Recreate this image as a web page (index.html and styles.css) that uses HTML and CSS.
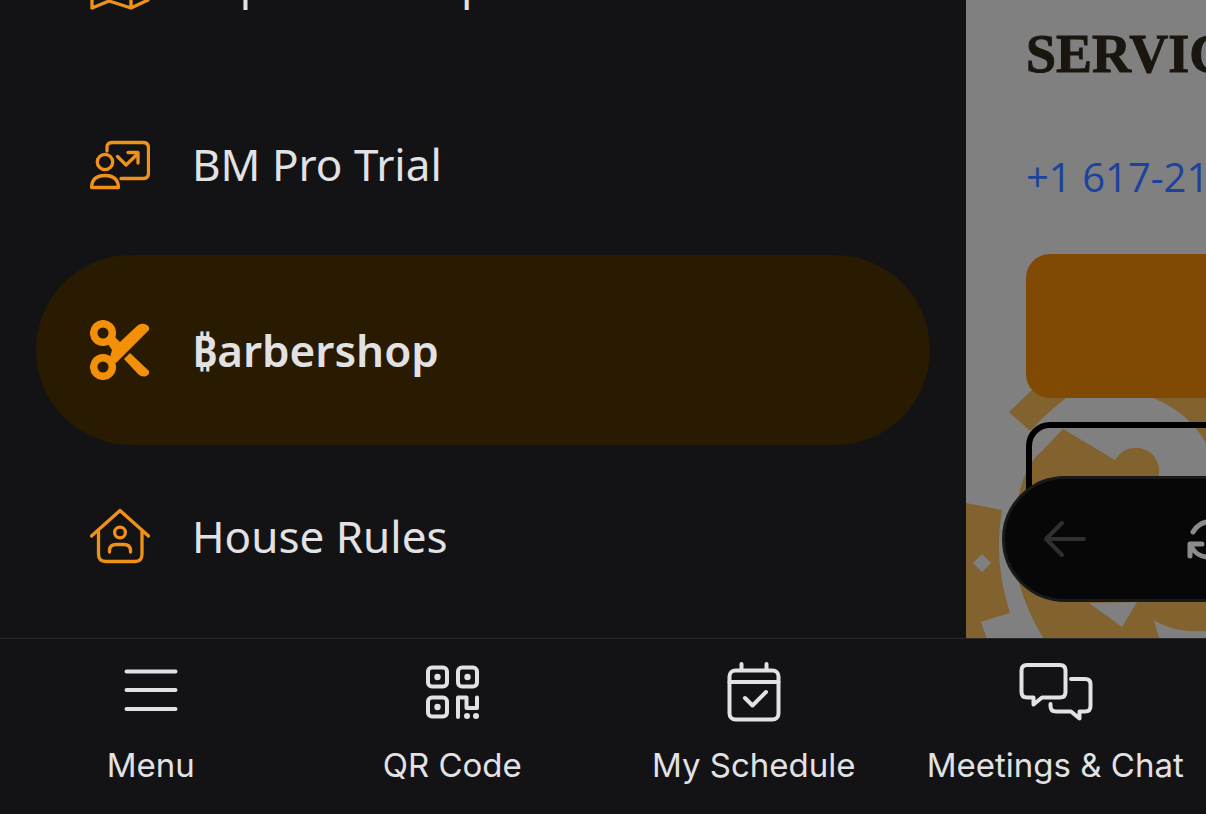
FILE: index.html
```html
<!DOCTYPE html>
<html lang="en">
<head>
<meta charset="utf-8">
<meta name="viewport" content="width=device-width, initial-scale=1">
<title>Barbershop</title>
<link rel="stylesheet" href="styles.css">
</head>
<body>
<div class="app">
  <div class="stage">
    <nav class="drawer" aria-label="Main menu">
      <a class="drawer-item" href="#map">
        <svg class="drawer-icon" viewBox="0 0 60 60"><path d="M2 9 19 2 41 9 58 2V48L41 56 19 49 2 56ZM19 2V49M41 9V56"/></svg>
        <span>Expo Hall Map</span>
      </a>
      <a class="drawer-item" href="#trial">
        <svg class="drawer-icon" viewBox="0 0 60 60"><path d="M17 17V13Q17 8.500 22 8.500H53Q58.500 8.500 58.500 14V39Q58.500 44.500 53 44.500H31"/><circle cx="15" cy="28" r="7.700"/><path d="M1.500 53.500Q2 41.500 15 41.500T28.500 53.500Z"/><path d="M27.500 22.500 36 31 47.500 20M38 18.500H48V29"/></svg>
        <span>BM Pro Trial</span>
      </a>
      <a class="drawer-item active" href="#barbershop" aria-current="page">
        <svg class="drawer-icon" viewBox="0 0 60 60"><g class="rings"><circle cx="13" cy="13" r="9.300"/><circle cx="13" cy="47" r="9.300"/></g><path class="blade" d="M25 17 30 22 47 6Q51 2.500 56 4.500Q60 6 59 10L26 43 20 37 22 30 18 24ZM40 33 59 51Q60 55 55 56.500Q51 57 48 54L34 39Z"/></svg>
        <span>₿arbershop</span>
      </a>
      <a class="drawer-item" href="#rules">
        <svg class="drawer-icon" viewBox="0 0 60 60"><path d="M1.500 30 30 4.500 58.500 30M8.500 25V48Q8.500 55.500 16 55.500H45Q52 55.500 52 48V25"/><circle cx="30" cy="26.500" r="5.400"/><path d="M19.500 46V44Q20 38.500 26 38.500H34Q40 38.500 40.500 44V46"/></svg>
        <span>House Rules</span>
      </a>
    </nav>
    <main class="page">
      <svg class="watermark" viewBox="0 0 240 638">
        <g class="ink">
          <path d="M43 412 66 390H112Q88 405 64 431Z"/>
          <path d="M187 398H240V443Q222 412 187 398Z"/>
          <path d="M97 429 149 460Q158 446 173 448Q190 451 193 468V620L240 630V638H77Q60 610 52 580V500Q58 465 77 450Z"/>
          <path d="M180 580H240V632Q205 633 188 620L194 638H170Z"/>
          <path d="M0 503 36 510Q27 560 44 613L15 622 21 638H0Z"/>
        </g>
        <path class="paper" d="M123 603 156 627 171 602ZM188 620Q207 633 240 631V638H193ZM44 613 15 622 21 638H77Q60 610 52 580L36 580Z"/>
        <path class="paper" d="M16 554 25 563 16 572 7 563Z"/>
        <path class="ink" d="M0 638V622H15L9 638Z"/>
      </svg>
      <div class="page-content">
        <h1 class="heading">SERVICES</h1>
        <a class="phone" href="#call">+1 617-21</a>
        <button class="cta" type="button" aria-label="Book"></button>
        <button class="cta outline" type="button" aria-label="Details"></button>
      </div>
      <div class="browser-bar">
        <button class="bar-button" type="button" aria-label="Back"><svg class="bar-icon dim" viewBox="0 0 48 48"><path d="M21 8 5 24 21 40M5 24H43"/></svg></button>
        <button class="bar-button" type="button" aria-label="Reload"><svg class="bar-icon" viewBox="0 0 48 48"><path d="M8 17A20 20 0 0 1 43 17M42 31A20 20 0 0 1 6 31M5 41V29H17M45 7V19H33"/></svg></button>
      </div>
    </main>
  </div>
  <nav class="tabs" aria-label="Tabs">
    <a class="tab" href="#menu"><svg class="tab-icon" viewBox="0 0 76 64"><path d="M13.500 11.500H62.500M13.500 30H62.500M13.500 49H62.500"/></svg><span>Menu</span></a>
    <a class="tab" href="#qr"><svg class="tab-icon" viewBox="0 0 76 64"><rect x="14" y="7.500" width="19" height="19" rx="4"/><rect x="44" y="7.500" width="19" height="19" rx="4"/><rect x="14" y="37.500" width="19" height="19" rx="4"/><path d="M44 57V37.500H52.500V48H63V37.500"/><g class="dots"><circle cx="23.500" cy="17" r="3.200"/><circle cx="53.500" cy="17" r="3.200"/><circle cx="23.500" cy="47" r="3.200"/><circle cx="53" cy="56" r="3"/><circle cx="62" cy="56" r="3"/></g></svg><span>QR Code</span></a>
    <a class="tab" href="#schedule"><svg class="tab-icon" viewBox="0 0 76 64"><rect x="13.500" y="10.500" width="49" height="49" rx="6"/><path d="M13.500 22H62.500M25.500 4V10M50.500 4V10M29 38 36.500 45.500 50 32"/></svg><span>My Schedule</span></a>
    <a class="tab" href="#chat"><svg class="tab-icon" viewBox="0 0 76 64"><path d="M10 5H43Q48.500 5 48.500 10.500V32Q48.500 37.500 43 37.500H25L16.500 44.500V37.500H10Q4.500 37.500 4.500 32V10.500Q4.500 5 10 5Z"/><path d="M54 19H68Q73.500 19 73.500 24V46Q73.500 51.500 68 51.500H62.500V58.500L54 51.500H39Q33.500 51.500 33.500 46V44"/></svg><span>Meetings &amp; Chat</span></a>
  </nav>
</div>
</body>
</html>
```
FILE: styles.css
```css
* { box-sizing: border-box; }
body { margin: 0; background: #131315; color: #e2e2e4; font-family: Inter, "Liberation Sans", sans-serif; }
a { color: inherit; text-decoration: none; }
button { margin: 0; padding: 0; border: 0; background: none; }
svg { display: block; flex: none; fill: none; stroke: currentColor; stroke-linejoin: round; stroke-linecap: round; }

.app { height: 100vh; display: flex; flex-direction: column; overflow: hidden; }
.stage { flex: 1; min-height: 0; display: flex; }

.drawer { flex: 1; min-width: 0; display: flex; flex-direction: column; justify-content: flex-end; padding: 0 36px 11px; overflow: hidden; }
.drawer-item { flex: none; height: 182px; padding: 0 54px; display: flex; align-items: center; gap: 42px; font: 44px/60px "Noto Sans", sans-serif; white-space: nowrap; }
.drawer-item.active { height: 190px; border-radius: 95px; background: #291b02; font-weight: 600; }
.drawer-icon { width: 60px; height: 60px; color: #ef9217; stroke-width: 3.3; }
.active .drawer-icon { color: #f39007; }
.rings { stroke-width: 7.5; }
.blade { fill: currentColor; stroke: none; }

.page { position: relative; flex: none; width: 240px; background: #808080; overflow: hidden; }
.watermark { position: absolute; inset: auto 0 0; width: 100%; stroke: none; }
.ink { fill: #82622f; }
.paper { fill: #808080; }
.page-content { position: relative; width: 500px; padding: 24px 60px; display: flex; flex-direction: column; }
.heading { margin: 0 0 78px; color: #1a160f; font: bold 54px/60px "Liberation Serif", serif; -webkit-text-stroke: 1px #1a160f; }
.phone { margin-bottom: 62px; height: 30px; color: #1d429b; font: 40px/30px "Open Sans", sans-serif; }
.cta { height: 144px; margin-bottom: 24px; border-radius: 24px; background: #804a05; }
.outline { border: 6px solid #000; background: none; }
.browser-bar { position: absolute; left: 36px; bottom: 36px; width: 500px; height: 126px; padding: 0 36px; display: flex; align-items: center; gap: 96px; border: 3px solid #191919; border-radius: 63px; background: #070707; }
.bar-icon { width: 48px; height: 48px; color: #8c8c8c; stroke-width: 5; }
.dim { color: #303030; stroke-width: 4; }

.tabs { flex: none; height: 176px; padding-top: 21px; border-top: 1px solid #29292b; display: grid; grid-template-columns: repeat(4, 1fr); }
.tab { display: flex; flex-direction: column; align-items: center; gap: 19px; font-size: 33px; line-height: 44px; white-space: nowrap; }
.tab-icon { width: 76px; height: 64px; stroke-width: 4; }
.dots { fill: currentColor; stroke: none; }
```
